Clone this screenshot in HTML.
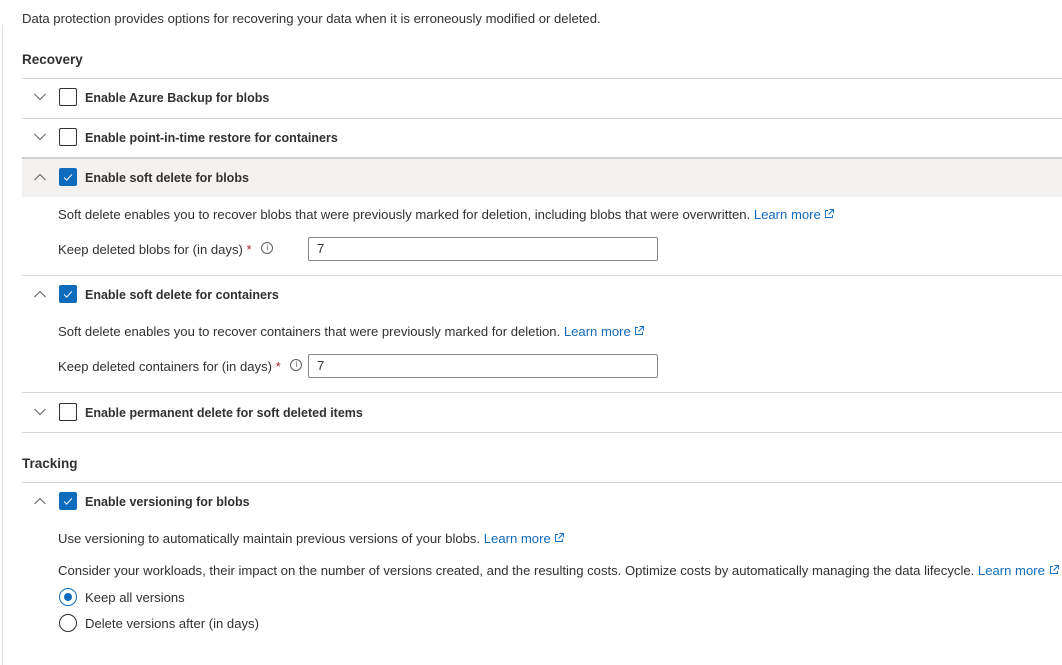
<!DOCTYPE html>
<html><head><meta charset="utf-8"><style>
*{margin:0;padding:0;box-sizing:border-box}
body{width:1062px;height:653px;background:#fff;position:relative;overflow:hidden;font-family:"Liberation Sans",sans-serif;font-size:13.1px;color:#323130}
.a{position:absolute;white-space:nowrap;line-height:16px;margin-top:1px}
.vl{position:absolute;left:2px;top:25px;width:1px;height:640px;background:#e1dfdd}
.hl{position:absolute;left:22px;right:0;height:1px;background:#d6d6d6}
.h{font-size:13.5px;font-weight:bold;color:#323130}
.b{font-weight:bold;font-size:12.5px}
.cb{position:absolute;left:59px;width:18px;height:18px;border:1px solid #323130;border-radius:2px;background:#fff}
.cb.on{background:#0f6cbd;border-color:#0f6cbd}
.chev{position:absolute;left:34px;width:12px;height:8px}
.lnk{color:#0f6cbd}
.inp{position:absolute;left:308px;width:350px;height:24px;border:1px solid #8a8886;border-radius:2px;padding-left:8px;line-height:22px}
.req{color:#a4262c}
.info{display:inline-block;position:relative;top:-3px;width:12px;height:12px;border:1px solid #605e5c;border-radius:50%;font-size:8px;text-align:center;line-height:10px;vertical-align:middle;margin-left:6px;color:#605e5c}
.rd{position:absolute;left:59px;width:18px;height:18px;border:1px solid #323130;border-radius:50%}
.rd.on{border-color:#0f6cbd}
.rd.on:after{content:"";position:absolute;left:4px;top:4px;width:8px;height:8px;border-radius:50%;background:#0f6cbd}
</style></head><body>
<div class="vl"></div>
<svg width="0" height="0" style="position:absolute"><defs>
<symbol id="dn" viewBox="0 0 12 8"><path d="M0.5 1 L6 6.5 L11.5 1" fill="none" stroke="#605e5c" stroke-width="1"/></symbol>
<symbol id="up" viewBox="0 0 12 8"><path d="M0.5 7 L6 1.5 L11.5 7" fill="none" stroke="#605e5c" stroke-width="1"/></symbol>
<symbol id="ck" viewBox="0 0 18 18"><path d="M4.5 9.5 L7.5 12.5 L13.5 6" fill="none" stroke="#fff" stroke-width="1.1"/></symbol>
<symbol id="ext" viewBox="0 0 10 10"><path d="M4 1.5H1.5V8.5H8.5V6 M5.5 0.5H9.5V4.5 M9.5 0.5L4.5 5.5" fill="none" stroke="#0f6cbd" stroke-width="0.9"/></symbol>
</defs></svg>

<div class="a" style="left:22px;top:10px">Data protection provides options for recovering your data when it is erroneously modified or deleted.</div>
<div class="a h" style="left:22px;top:51px">Recovery</div>
<div class="hl" style="top:78px"></div>

<svg class="chev" style="top:93px"><use href="#dn"/></svg>
<div class="cb" style="top:88px"></div>
<div class="a b" style="left:85px;top:89px">Enable Azure Backup for blobs</div>
<div class="hl" style="top:118px"></div>

<svg class="chev" style="top:133px"><use href="#dn"/></svg>
<div class="cb" style="top:128px"></div>
<div class="a b" style="left:85px;top:129px">Enable point-in-time restore for containers</div>
<div class="hl" style="top:157px;height:2px;background:#d2d0ce"></div>
<div style="position:absolute;left:22px;right:0;top:159px;height:38px;background:#f3f2f1"></div>

<svg class="chev" style="top:173px"><use href="#up"/></svg>
<div class="cb on" style="top:168px"><svg width="16" height="16" viewBox="0 0 18 18"><use href="#ck"/></svg></div>
<div class="a b" style="left:85px;top:169px">Enable soft delete for blobs</div>

<div class="a" style="left:58px;top:206px">Soft delete enables you to recover blobs that were previously marked for deletion, including blobs that were overwritten. <span class="lnk">Learn more</span> <svg width="10" height="10"><use href="#ext"/></svg></div>
<div class="a" style="left:58px;top:241px">Keep deleted blobs for (in days) <span class="req">*</span> <span class="info">i</span></div>
<div class="inp" style="top:237px">7</div>
<div class="hl" style="top:275px"></div>

<svg class="chev" style="top:290px"><use href="#up"/></svg>
<div class="cb on" style="top:285px"><svg width="16" height="16" viewBox="0 0 18 18"><use href="#ck"/></svg></div>
<div class="a b" style="left:85px;top:286px">Enable soft delete for containers</div>
<div class="a" style="left:58px;top:323px">Soft delete enables you to recover containers that were previously marked for deletion. <span class="lnk">Learn more</span> <svg width="10" height="10"><use href="#ext"/></svg></div>
<div class="a" style="left:58px;top:358px">Keep deleted containers for (in days) <span class="req">*</span> <span class="info">i</span></div>
<div class="inp" style="top:354px">7</div>
<div class="hl" style="top:392px"></div>

<svg class="chev" style="top:408px"><use href="#dn"/></svg>
<div class="cb" style="top:403px"></div>
<div class="a b" style="left:85px;top:404px">Enable permanent delete for soft deleted items</div>
<div class="hl" style="top:432px"></div>

<div class="a h" style="left:22px;top:455px">Tracking</div>
<div class="hl" style="top:482px"></div>

<svg class="chev" style="top:497px"><use href="#up"/></svg>
<div class="cb on" style="top:492px"><svg width="16" height="16" viewBox="0 0 18 18"><use href="#ck"/></svg></div>
<div class="a b" style="left:85px;top:493px">Enable versioning for blobs</div>
<div class="a" style="left:58px;top:530px">Use versioning to automatically maintain previous versions of your blobs. <span class="lnk">Learn more</span> <svg width="10" height="10"><use href="#ext"/></svg></div>
<div class="a" style="left:58px;top:562px">Consider your workloads, their impact on the number of versions created, and the resulting costs. Optimize costs by automatically managing the data lifecycle. <span class="lnk">Learn more</span> <svg width="10" height="10"><use href="#ext"/></svg></div>
<div class="rd on" style="top:588px"></div>
<div class="a" style="left:85px;top:589px">Keep all versions</div>
<div class="rd" style="top:614px"></div>
<div class="a" style="left:85px;top:615px">Delete versions after (in days)</div>
</body></html>
